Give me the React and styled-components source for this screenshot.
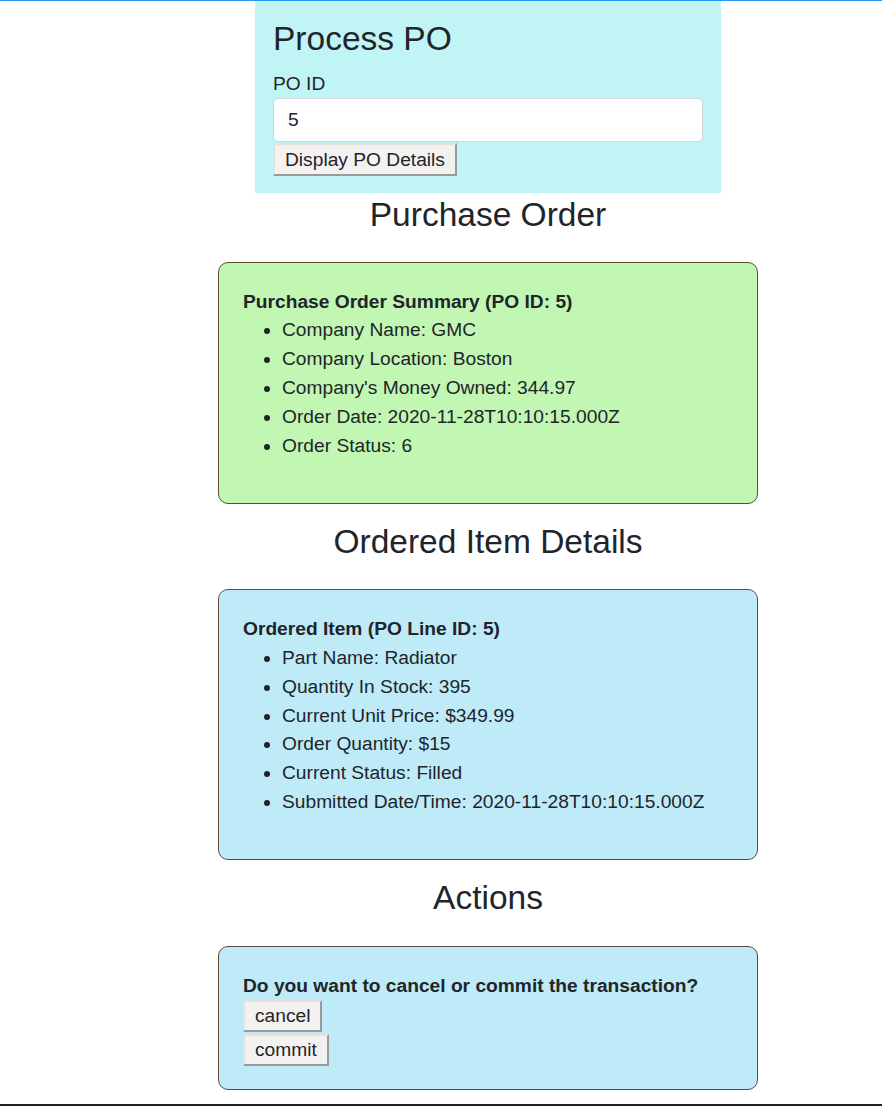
import styled, { createGlobalStyle } from "styled-components";

const GlobalStyle = createGlobalStyle`
    html, body {
        margin: 0;
        padding: 0;
        background: #ffffff;
    }

    body {
        font-family: "Liberation Sans", Arial, sans-serif;
        font-size: 19.2px;
        line-height: 1.5;
        color: #212529;
        border-top: 1px solid #2196f3;
    }

    * {
        box-sizing: border-box;
    }
`

const Page = styled.div`
    display: flex;
    flex-direction: column;
`

const Column = styled.div`
    width: 540px;
    margin-left: 218px;
    display: flex;
    flex-direction: column;
`

const FormPanel = styled.form`
    align-self: center;
    width: 466px;
    background: #c1f4f5;
    padding: 18px 18px 17px 18px;
    display: flex;
    flex-direction: column;
    align-items: flex-start;

    h1 {
        font-size: 33.5px;
        font-weight: 400;
        line-height: 1.2;
        margin: 0 0 10.5px 0;
    }

    label {
        display: block;
    }
`

const TextInput = styled.input`
    width: 100%;
    height: 44px;
    padding: 0 14px;
    font-family: inherit;
    font-size: 19.2px;
    color: #212529;
    background: #fff;
    border: 1px solid #ced4da;
    border-radius: 5px;
    margin: 0 0 1px 0;
`

const Button = styled.button`
    font-family: inherit;
    font-size: 19.2px;
    line-height: 1.5;
    color: #212529;
    background: #f3f2f1;
    padding: 0 10px;
    height: ${p => p.$tall ? "33px" : "32px"};
    border-style: solid;
    border-width: 2px;
    border-color: #e2e2e2 #9a9a9a #9a9a9a #e2e2e2;
    border-radius: 0;
    display: block;
`

const SectionTitle = styled.h2`
    text-align: center;
    font-size: 33.5px;
    font-weight: 400;
    line-height: 1.2;
    margin: 2px 0 ${p => p.$first ? "26px" : "27px"} 0;
`

const Card = styled.div`
    background: ${p => p.$bg};
    border: 1px solid #5f4b3a;
    border-radius: 10px;
    padding: 25px 24px 23px 24px;
    margin-bottom: 16.4px;

    &:last-child {
        margin-bottom: 14px;
    }

    strong {
        display: block;
        font-weight: 700;
    }

    ul {
        margin: 0 0 19.2px 0;
        padding-left: 39px;
    }
`

const ButtonStack = styled.div`
    display: flex;
    flex-direction: column;
    align-items: flex-start;
    gap: 1.5px;
`

const Footer = styled.footer`
    height: 40px;
    background: #212121;
`

const App = () => {
    const po = {
        id: 5,
        company: "GMC",
        location: "Boston",
        owed: "344.97",
        date: "2020-11-28T10:10:15.000Z",
        status: 6,
    }

    const line = {
        id: 5,
        part: "Radiator",
        stock: 395,
        price: "$349.99",
        qty: "$15",
        status: "Filled",
        submitted: "2020-11-28T10:10:15.000Z",
    }

    return (
        <>
            <GlobalStyle />
            <Page>
                <Column>
                    <FormPanel onSubmit={e => e.preventDefault()}>
                        <h1>Process PO</h1>
                        <label htmlFor="poid">PO ID</label>
                        <TextInput id="poid" defaultValue="5" />
                        <Button $tall type="submit">Display PO Details</Button>
                    </FormPanel>

                    <SectionTitle $first>Purchase Order</SectionTitle>
                    <Card $bg="#c1f6b3">
                        <strong>Purchase Order Summary (PO ID: {po.id})</strong>
                        <ul>
                            <li>Company Name: {po.company}</li>
                            <li>Company Location: {po.location}</li>
                            <li>Company's Money Owned: {po.owed}</li>
                            <li>Order Date: {po.date}</li>
                            <li>Order Status: {po.status}</li>
                        </ul>
                    </Card>

                    <SectionTitle>Ordered Item Details</SectionTitle>
                    <Card $bg="#bfebf8">
                        <strong>Ordered Item (PO Line ID: {line.id})</strong>
                        <ul>
                            <li>Part Name: {line.part}</li>
                            <li>Quantity In Stock: {line.stock}</li>
                            <li>Current Unit Price: {line.price}</li>
                            <li>Order Quantity: {line.qty}</li>
                            <li>Current Status: {line.status}</li>
                            <li>Submitted Date/Time: {line.submitted}</li>
                        </ul>
                    </Card>

                    <SectionTitle>Actions</SectionTitle>
                    <Card $bg="#bfebf8">
                        <strong>Do you want to cancel or commit the transaction?</strong>
                        <ButtonStack>
                            <Button>cancel</Button>
                            <Button>commit</Button>
                        </ButtonStack>
                    </Card>
                </Column>
                <Footer />
            </Page>
        </>
    );
}

export default App;
